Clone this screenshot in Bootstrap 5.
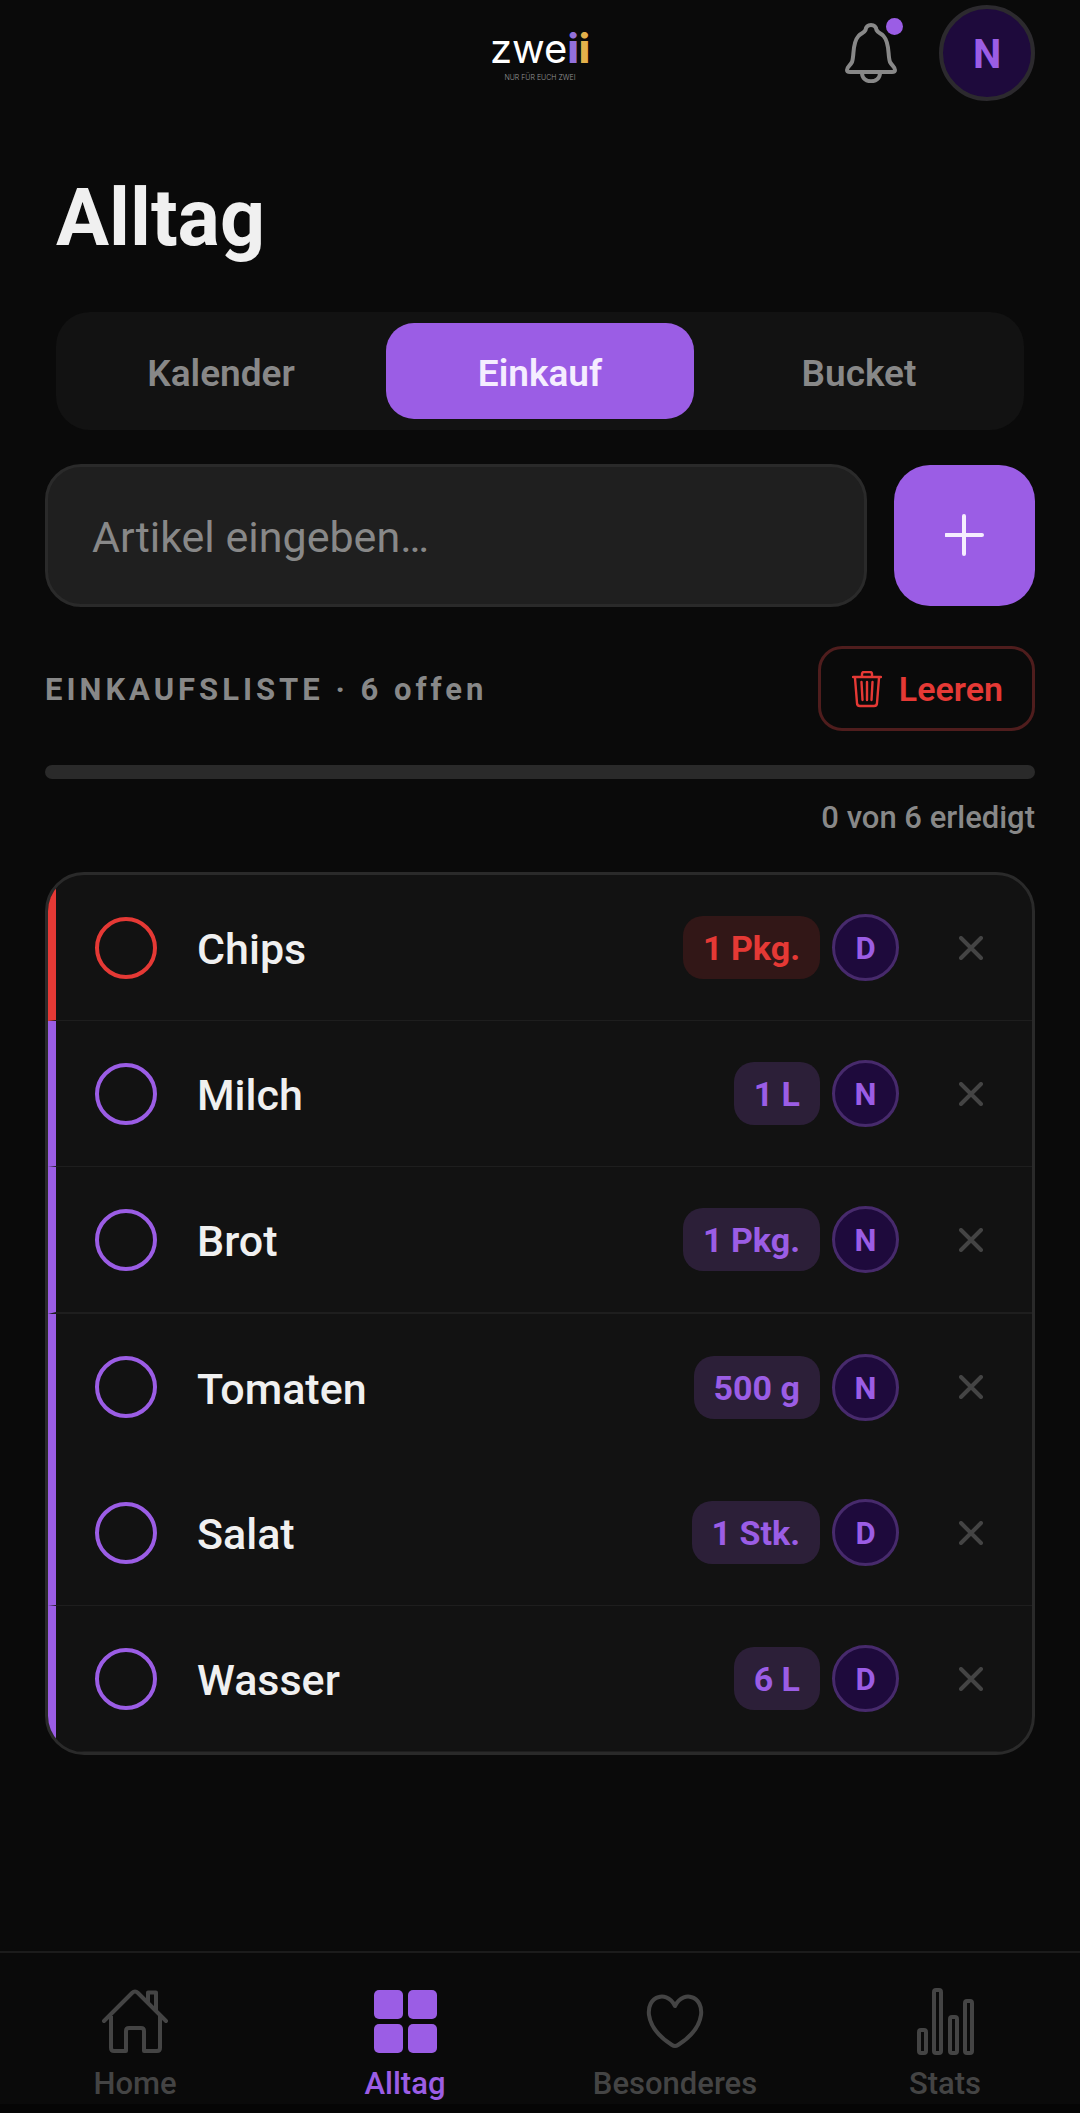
<!DOCTYPE html>
<html lang="de" data-bs-theme="dark">
<head>
<meta charset="utf-8">
<meta name="viewport" content="width=device-width, initial-scale=1">
<title>zweii – Alltag</title>
<link href="https://cdn.jsdelivr.net/npm/bootstrap@5.3.0/dist/css/bootstrap.min.css" rel="stylesheet">
<style>
:root { --accent: #9b5de5; --danger: #e53935; --line: #2a2a2a; --deep: #1e0a3c; --dim: #888; --faint: #444; }
body { background: #0a0a0a; color: #f0f0f0; font-family: Roboto, "Liberation Sans", sans-serif; }
svg { display: block; fill: none; stroke: currentColor; stroke-linecap: round; stroke-linejoin: round; }
.topbar { display: grid; grid-template-columns: 1fr auto 1fr; height: 106px; padding: 0 45px; }
.wordmark { font: 400 40px/49px Inter, sans-serif; color: #fff; }
.wordmark b { font-weight: 800; }
.wordmark .i-one { color: #9370db; }
.wordmark .i-two { color: #e3b04b; }
.tagline { font: 300 7px/9px Inter, sans-serif; color: #999; }
.bell { color: var(--dim); }
.bell-dot { position: absolute; top: -5px; right: -6px; width: 17px; height: 17px; background: var(--accent); }
.initial { background: var(--deep); color: var(--accent); font-weight: 700; flex: none; }
.initial-lg { width: 96px; height: 96px; border: 4px solid #2c2a2e; font-size: 40px; margin-left: 42px; padding-top: 4px; }
.initial-sm { width: 67px; height: 67px; border: 3px solid #472a6c; font-size: 31px; padding-top: 4px; }
.page-title { font-size: 79px; line-height: 96px; font-weight: 700; color: #f0f0f0; padding: 64px 56px 0; margin: 0 0 46px; }
.tabs { margin: 0 56px 34px; padding: 11px; gap: 11px; background: #121212; border-radius: 34px; }
.tabs .nav-link { height: 96px; padding-top: 13px; border-radius: 28px; font-size: 37px; line-height: 44px; font-weight: 600; color: var(--dim); }
.tabs .nav-link.active { background: var(--accent); color: #f5edff; }
.content { padding: 0 45px; }
.add-row { gap: 27px; margin-bottom: 39px; }
.add-field { height: 143px; border: 3px solid var(--line); border-radius: 36px; background: #1f1f1f; font-size: 43px; padding: 2px 44px 0; color: #f0f0f0; }
.add-field::placeholder { color: var(--dim); opacity: 1; }
.add-btn { width: 141px; height: 141px; border-radius: 36px; background: var(--accent); color: #f5edff; flex: none; }
.list-head { margin-bottom: 34px; }
.list-label { font-size: 31px; line-height: 40px; font-weight: 700; letter-spacing: 4px; color: var(--dim); margin: 0; padding-top: 2px; }
.clear-btn { height: 85px; padding: 2px 29px 0 31px; gap: 17px; border: 3px solid #4f1d1d; border-radius: 24px; font-size: 34px; font-weight: 600; color: var(--danger); }
.done-bar { height: 14px; border-radius: 7px; background: var(--line); }
.done-note { font-size: 31px; line-height: 40px; font-weight: 500; color: var(--dim); padding: 19px 0 34px; }
.items { border: 3px solid var(--line); border-radius: 39px; background: #121212; overflow: hidden; }
.item { --tone: var(--accent); --tint: #2c1f38; height: 146px; padding: 0 31px 0 39px; border-left: 8px solid var(--tone); border-bottom: 1px solid #1e1e1e; }
.item.urgent { --tone: var(--danger); --tint: #321717; }
.item.group-end { height: 147px; border-bottom-width: 2px; }
.item.joined { border-bottom: 0; }
.item .form-check-input { width: 62px; height: 62px; border: 4px solid var(--tone); border-radius: 50%; background-color: transparent; flex: none; }
.item-name { font-size: 43px; line-height: 52px; font-weight: 500; padding: 3px 0 0 40px; }
.qty { height: 63px; padding: 2px 20px 0; border-radius: 20px; background: var(--tint); color: var(--tone); font-size: 34px; font-weight: 700; margin-right: 12px; }
.remove { width: 61px; height: 61px; margin-left: 41px; color: var(--faint); }
.bottom { border-top: 2px solid #1c1c1c; border-bottom: 9px solid #050505; padding-top: 34px; background: #0a0a0a; }
.bottom .nav-link { padding: 0; gap: 5px; color: var(--faint); font-size: 31px; line-height: 40px; font-weight: 500; }
.bottom .nav-link.active { color: var(--accent); }
.bottom .tiles { fill: currentColor; stroke: none; }
</style>
</head>
<body>
<div class="d-flex flex-column min-vh-100">
  <header class="topbar align-items-center">
    <span></span>
    <a href="#" class="text-decoration-none text-center">
      <div class="wordmark">zwe<b class="i-one">i</b><b class="i-two">i</b></div>
      <div class="tagline">NUR FÜR EUCH ZWEI</div>
    </a>
    <div class="d-flex align-items-center justify-content-end">
      <button class="btn p-0 border-0 position-relative bell" type="button" aria-label="Benachrichtigungen">
        <svg width="52" height="60" viewBox="0 0 52 60" stroke-width="4">
          <path d="M26 2C22.500 2 21 4 20.500 7C19 10 16 10 13.500 13C7 20 9.500 32 7 39C5 43 2 44 2 47C2 49 3 49 5 49H47C49 49 50 49 50 47C50 44 47 43 45 39C42.500 32 45 20 38.500 13C36 10 33 10 31.500 7C31 4 29.500 2 26 2Z"/><path d="M17 50C17 61 35 61 35 50"/>
        </svg>
        <span class="bell-dot rounded-circle"></span>
      </button>
      <button class="btn px-0 pb-0 initial initial-lg rounded-circle" type="button" aria-label="Profil N">N</button>
    </div>
  </header>

  <main>
    <h1 class="page-title">Alltag</h1>
    <ul class="nav nav-pills nav-fill flex-nowrap tabs">
      <li class="nav-item w-100"><button class="nav-link w-100" type="button">Kalender</button></li>
      <li class="nav-item w-100"><button class="nav-link active w-100" type="button" aria-current="page">Einkauf</button></li>
      <li class="nav-item w-100"><button class="nav-link w-100" type="button">Bucket</button></li>
    </ul>

    <div class="content">
      <form class="d-flex align-items-center add-row">
        <input class="form-control add-field" type="text" placeholder="Artikel eingeben…" aria-label="Artikel eingeben">
        <button class="btn p-0 border-0 add-btn d-flex align-items-center justify-content-center" type="button" aria-label="Hinzufügen">
          <svg width="40" height="48" viewBox="0 0 40 48" stroke-width="4"><path d="M1 23H37M19 4V42"/></svg>
        </button>
      </form>

      <div class="d-flex align-items-center justify-content-between list-head">
        <h2 class="list-label">EINKAUFSLISTE · 6 offen</h2>
        <button class="btn clear-btn d-flex align-items-center" type="button">
          <svg width="30" height="38" viewBox="0 0 30 38" stroke-width="2.400"><path d="M1 6H29M10 5V3Q10 1 12 1H18Q20 1 20 3V5M3 7L5 32Q5 35 8 35H22Q25 35 25 32L27 7M9.500 11L10.500 29M15 11V29M20.500 11L19.500 29"/></svg>
          Leeren
        </button>
      </div>
      <div class="progress done-bar" role="progressbar" aria-label="Erledigt" aria-valuenow="0" aria-valuemin="0" aria-valuemax="6"><div class="progress-bar" style="width:0%"></div></div>
      <div class="done-note text-end">0 von 6 erledigt</div>

      <ul class="items list-unstyled" id="items">
        <li class="item urgent d-flex align-items-center"><input class="form-check-input m-0" type="checkbox" id="i1"><label class="item-name flex-grow-1" for="i1">Chips</label><span class="qty d-flex align-items-center">1 Pkg.</span><span class="initial initial-sm rounded-circle d-flex align-items-center justify-content-center">D</span><button class="btn p-0 border-0 remove d-flex align-items-center justify-content-center" type="button" aria-label="Chips entfernen"><svg width="24" height="24" viewBox="0 0 24 24" stroke-width="4"><path d="M2 2L22 22M22 2L2 22"/></svg></button></li>
        <li class="item d-flex align-items-center"><input class="form-check-input m-0" type="checkbox" id="i2"><label class="item-name flex-grow-1" for="i2">Milch</label><span class="qty d-flex align-items-center">1 L</span><span class="initial initial-sm rounded-circle d-flex align-items-center justify-content-center">N</span><button class="btn p-0 border-0 remove d-flex align-items-center justify-content-center" type="button" aria-label="Milch entfernen"><svg width="24" height="24" viewBox="0 0 24 24" stroke-width="4"><path d="M2 2L22 22M22 2L2 22"/></svg></button></li>
        <li class="item group-end d-flex align-items-center"><input class="form-check-input m-0" type="checkbox" id="i3"><label class="item-name flex-grow-1" for="i3">Brot</label><span class="qty d-flex align-items-center">1 Pkg.</span><span class="initial initial-sm rounded-circle d-flex align-items-center justify-content-center">N</span><button class="btn p-0 border-0 remove d-flex align-items-center justify-content-center" type="button" aria-label="Brot entfernen"><svg width="24" height="24" viewBox="0 0 24 24" stroke-width="4"><path d="M2 2L22 22M22 2L2 22"/></svg></button></li>
        <li class="item joined d-flex align-items-center"><input class="form-check-input m-0" type="checkbox" id="i4"><label class="item-name flex-grow-1" for="i4">Tomaten</label><span class="qty d-flex align-items-center">500 g</span><span class="initial initial-sm rounded-circle d-flex align-items-center justify-content-center">N</span><button class="btn p-0 border-0 remove d-flex align-items-center justify-content-center" type="button" aria-label="Tomaten entfernen"><svg width="24" height="24" viewBox="0 0 24 24" stroke-width="4"><path d="M2 2L22 22M22 2L2 22"/></svg></button></li>
        <li class="item d-flex align-items-center"><input class="form-check-input m-0" type="checkbox" id="i5"><label class="item-name flex-grow-1" for="i5">Salat</label><span class="qty d-flex align-items-center">1 Stk.</span><span class="initial initial-sm rounded-circle d-flex align-items-center justify-content-center">D</span><button class="btn p-0 border-0 remove d-flex align-items-center justify-content-center" type="button" aria-label="Salat entfernen"><svg width="24" height="24" viewBox="0 0 24 24" stroke-width="4"><path d="M2 2L22 22M22 2L2 22"/></svg></button></li>
        <li class="item d-flex align-items-center"><input class="form-check-input m-0" type="checkbox" id="i6"><label class="item-name flex-grow-1" for="i6">Wasser</label><span class="qty d-flex align-items-center">6 L</span><span class="initial initial-sm rounded-circle d-flex align-items-center justify-content-center">D</span><button class="btn p-0 border-0 remove d-flex align-items-center justify-content-center" type="button" aria-label="Wasser entfernen"><svg width="24" height="24" viewBox="0 0 24 24" stroke-width="4"><path d="M2 2L22 22M22 2L2 22"/></svg></button></li>
      </ul>
    </div>
  </main>

  <nav class="bottom nav nav-fill mt-auto flex-nowrap" aria-label="Hauptnavigation">
    <a class="nav-link w-100 d-flex flex-column align-items-center" href="#">
      <svg width="70" height="72" viewBox="0 0 70 72" stroke-width="4"><path d="M4 34L32 6Q35 3 38 6L66 34M11 29V61Q11 64 14 64H26V44Q26 41 29 41H41Q44 41 44 44V64H57Q60 64 60 61V29M48 15V5.500H56V23"/></svg>
      Home</a>
    <a class="nav-link active w-100 d-flex flex-column align-items-center" href="#" aria-current="page">
      <svg class="tiles" width="70" height="72" viewBox="0 0 70 72"><rect x="4" y="3" width="29" height="29" rx="5"/><rect x="38" y="3" width="29" height="29" rx="5"/><rect x="4" y="37" width="29" height="29" rx="5"/><rect x="38" y="37" width="29" height="29" rx="5"/></svg>
      Alltag</a>
    <a class="nav-link w-100 d-flex flex-column align-items-center" href="#">
      <svg width="70" height="72" viewBox="0 0 70 72" stroke-width="4"><path d="M35 19C30 9 22 9 19 10C11 12 8 20 9 28C11 42 21 51 32 58Q35 60 38 58C49 51 59 42 61 28C62 20 59 12 51 10C48 9 40 9 35 19Z"/></svg>
      Besonderes</a>
    <a class="nav-link w-100 d-flex flex-column align-items-center" href="#">
      <svg width="70" height="72" viewBox="0 0 70 72" stroke-width="4"><rect x="9" y="43" width="7" height="23" rx="2"/><rect x="24" y="3" width="7" height="63" rx="2"/><rect x="40" y="30" width="7" height="36" rx="2"/><rect x="55" y="14" width="7" height="52" rx="2"/></svg>
      Stats</a>
  </nav>
</div>
<script src="https://cdn.jsdelivr.net/npm/bootstrap@5.3.0/dist/js/bootstrap.bundle.min.js"></script>
</body>
</html>
